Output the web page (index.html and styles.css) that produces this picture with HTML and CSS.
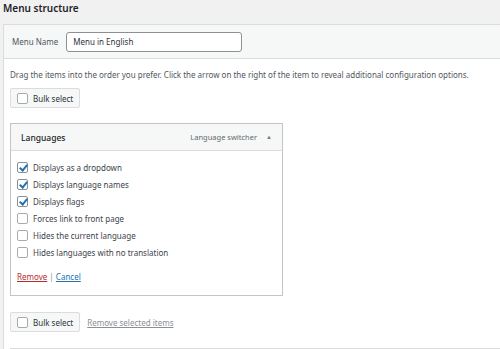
FILE: index.html
```html
<!DOCTYPE html>
<html lang="en">
<head>
<meta charset="UTF-8" />
<meta name="viewport" content="width=device-width, initial-scale=1" />
<title>Menu structure</title>
<link rel="stylesheet" href="styles.css">
</head>
<body>

<h2 class="title">Menu structure</h2>

<div class="menu-edit">
  <div class="menu-header">
    <label class="name-label">Menu Name</label>
    <input class="name-input" type="text" value="Menu in English">
  </div>

  <div class="menu-body">
    <p class="hint">Drag the items into the order you prefer. Click the arrow on the right of the item to reveal additional configuration options.</p>

    <div class="bulk-row">
      <span class="bulk-btn"><span class="box"></span>Bulk select</span>
    </div>

    <div class="item">
      <div class="item-bar">
        <span class="item-title">Languages</span>
        <span class="item-type">Language switcher</span>
        <span class="arrow">&#9650;</span>
      </div>
      <div class="item-settings">
        <label class="opt"><span class="box checked"></span>Displays as a dropdown</label>
        <label class="opt"><span class="box checked"></span>Displays language names</label>
        <label class="opt"><span class="box checked"></span>Displays flags</label>
        <label class="opt"><span class="box"></span>Forces link to front page</label>
        <label class="opt"><span class="box"></span>Hides the current language</label>
        <label class="opt"><span class="box"></span>Hides languages with no translation</label>
        <div class="actions">
          <a class="remove" href="#">Remove</a> <span class="sep">|</span> <a class="cancel" href="#">Cancel</a>
        </div>
      </div>
    </div>

    <div class="bulk-row">
      <span class="bulk-btn"><span class="box"></span>Bulk select</span>
      <a class="remove-selected" href="#">Remove selected items</a>
    </div>
  </div>

  <div class="menu-footer"></div>
</div>

</body>
</html>
```

FILE: styles.css
```css
html, body {
  margin: 0;
  overflow: hidden;
}
body {
  font-family: "Noto Sans", sans-serif;
  font-size: 8px;
  color: #3c434a;
  background: #f1f1f1;
  width: 500px;
  height: 349px;
}

.title {
  margin: 0;
  padding: 0 0 0 3px;
  height: 24px;
  line-height: 16px;
  font-size: 10px;
  font-weight: 600;
  color: #1d2327;
}

/* --- box principale (il bordo destro resta fuori dallo schermo) --- */
.menu-edit {
  margin-left: 3px;
  border: 1px solid #dcdcde;
  border-right: none;
  background: #fff;
  height: 340px;
}
.menu-header {
  display: flex;
  align-items: center;
  height: 33px;
  padding: 0 8px;
  background: #f6f7f7;
  border-bottom: 1px solid #dcdcde;
}
.name-label {
  color: #50575e;
  margin-right: 8px;
}
.name-input {
  width: 176px;
  height: 20px;
  box-sizing: border-box;
  border: 1px solid #8c8f94;
  border-radius: 3px;
  padding: 0 6px;
  font: inherit;
  color: #2c3338;
  background: #fff;
}

.menu-body {
  padding: 0 6px;
}
.hint {
  margin: 9px 0 6px;
  line-height: 14px;
  color: #50575e;
}

/* --- bulk select --- */
.bulk-row {
  display: flex;
  align-items: center;
  gap: 7px;
}
.bulk-btn {
  display: inline-flex;
  align-items: center;
  gap: 5px;
  height: 20px;
  box-sizing: border-box;
  padding: 0 6px;
  background: #f6f7f7;
  border: 1px solid #dcdcde;
  border-radius: 2px;
  color: #2c3338;
}
.box {
  display: inline-block;
  width: 9px;
  height: 9px;
  border: 1px solid #a7aaad;
  border-radius: 2px;
  background: #fff;
  position: relative;
}
.box.checked {
  border-color: #8c8f94;
}
.box.checked::after {
  content: "";
  position: absolute;
  left: 3px;
  top: 0;
  width: 3px;
  height: 6px;
  border: solid #2271b1;
  border-width: 0 2px 2px 0;
  transform: rotate(40deg);
}

/* --- voce menu --- */
.item {
  width: 271px;
  margin: 15px 0 16px;
  border: 1px solid #c3c4c7;
}
.item-bar {
  display: flex;
  align-items: center;
  height: 26px;
  padding: 0 10px;
  background: #f6f7f7;
  border-bottom: 1px solid #dcdcde;
}
.item-title {
  flex: 1;
  font-size: 8.5px;
  font-weight: 500;
  color: #1d2327;
}
.item-type {
  color: #646970;
  font-size: 7.5px;
}
.arrow {
  margin-left: 9px;
  font-size: 6px;
  color: #787c82;
}
.item-settings {
  padding: 8px 6px 13px;
}
.opt {
  display: flex;
  align-items: center;
  gap: 5px;
  height: 17px;
}
.actions {
  margin-top: 10px;
}
.remove {
  color: #b32d2e;
}
.cancel {
  color: #2271b1;
}
.sep {
  color: #8c8f94;
}
.remove-selected {
  color: #8c8f94;
}

.menu-footer {
  margin: 16px 0 0 6px;
  border-top: 1px solid #dcdcde;
}
```
